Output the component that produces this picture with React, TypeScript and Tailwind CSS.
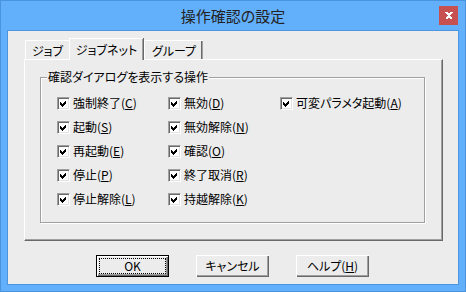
import React from "react";

const Check = () => (
  <span className="flex h-[13px] w-[13px] shrink-0 items-center justify-center border border-t-[#a0a0a0] border-l-[#a0a0a0] border-b-white border-r-white bg-white shadow-[inset_1px_1px_0_#696969,inset_-1px_-1px_0_#e3e3e3]">
    <svg width="9" height="9" viewBox="0 0 9 9" shapeRendering="crispEdges">
      <polygon points="1,3 3,5 7,1 7,4 3,8 1,6" fill="#000" />
    </svg>
  </span>
);

type Item = { label: string; key: string };

const items: Item[] = [
  { label: "強制終了", key: "C" },
  { label: "起動", key: "S" },
  { label: "再起動", key: "E" },
  { label: "停止", key: "P" },
  { label: "停止解除", key: "L" },
  { label: "無効", key: "D" },
  { label: "無効解除", key: "N" },
  { label: "確認", key: "O" },
  { label: "終了取消", key: "R" },
  { label: "持越解除", key: "K" },
  { label: "可変パラメタ起動", key: "A" },
];

const Label = ({ text, k }: { text: string; k: string }) => (
  <span className="whitespace-nowrap text-[12px] leading-[16px] text-black">
    {text}(<span className="underline underline-offset-[1px]">{k}</span>)
  </span>
);

const btnBase =
  "flex h-[22px] w-[73px] items-center justify-center text-[12px] leading-[16px] text-black bg-[#ececec] shadow-[inset_1px_1px_0_#fff,inset_-1px_-1px_0_#696969,inset_-2px_-2px_0_#a0a0a0]";

export default function App() {
  return (
    <div className="flex h-[292px] w-[466px] flex-col border border-[#4a93dd] bg-[#62b0fb] font-['Noto_Sans_CJK_JP',sans-serif] [font-feature-settings:'palt']">
      {/* title bar */}
      <div className="grid h-[29px] grid-cols-[1fr_auto_1fr]">
        <div />
        <div className="self-center pt-[1px] text-[15px] leading-[20px] text-[#222]">操作確認の設定</div>
        <div className="flex justify-end">
          <div className="mr-[7px] mt-[5px] flex h-[19px] w-[19px] items-center justify-center bg-[#c75050]">
            <svg width="8" height="7" viewBox="0 0 8 7" shapeRendering="crispEdges">
              <path d="M1 0 L4 3 L7 0 M1 7 L4 4 L7 7" stroke="#fff" strokeWidth="2" fill="none" />
            </svg>
          </div>
        </div>
      </div>

      {/* client */}
      <div className="mx-[6px] mb-[6px] flex flex-1 flex-col border border-[#4d96df] bg-[#ececec] px-[16px] pt-[7px]">
        {/* tabs */}
        <div className="relative z-10 flex h-[21px] items-end text-[12px] leading-[16px] text-black">
          <div className="ml-[1px] flex h-[19px] w-[44px] items-start justify-center border-l border-t border-white pt-[2px]">
            ジョブ
          </div>
          <div className="-mb-[1px] flex h-[22px] w-[74px] items-start justify-center border-l border-t border-white bg-[#ececec] pt-[3px] shadow-[inset_-1px_0_0_#a0a0a0,1px_0_0_#696969]">
            ジョブネット
          </div>
          <div className="ml-[1px] flex h-[19px] w-[59px] items-start justify-center border-l border-t border-white pt-[2px] shadow-[inset_-1px_0_0_#a0a0a0,inset_-2px_0_0_#696969]">
            グループ
          </div>
        </div>

        {/* panel */}
        <div className="h-[182px] w-[419px] border-l border-t border-white border-r border-b border-r-[#696969] border-b-[#696969] pl-[15px] pt-[17px] shadow-[inset_-1px_-1px_0_#a0a0a0]">
          <div className="relative h-[146px] w-[385px] border border-[#a0a0a0] shadow-[inset_1px_1px_0_#fff,1px_1px_0_#fff]">
            <span className="absolute left-[6px] top-[-9px] bg-[#ececec] px-[1px] text-[12px] leading-[16px] text-black">
              確認ダイアログを表示する操作
            </span>
            <div className="grid grid-flow-col grid-cols-[111px_112px_1fr] grid-rows-[repeat(5,24px)] pl-[16px] pt-[13px]">
              {items.map((it) => (
                <div key={it.key} className="flex items-center gap-[3px]">
                  <Check />
                  <Label text={it.label} k={it.key} />
                </div>
              ))}
            </div>
          </div>
        </div>

        {/* buttons */}
        <div className="mt-[14px] flex justify-center gap-[27px] pr-[1px]">
          <button className={btnBase + " border border-black outline-1 outline-dotted -outline-offset-4 outline-black"}>
            OK
          </button>
          <button className={btnBase}>キャンセル</button>
          <button className={btnBase}>
            ヘルプ(<span className="underline underline-offset-[1px]">H</span>)
          </button>
        </div>
      </div>
    </div>
  );
}
